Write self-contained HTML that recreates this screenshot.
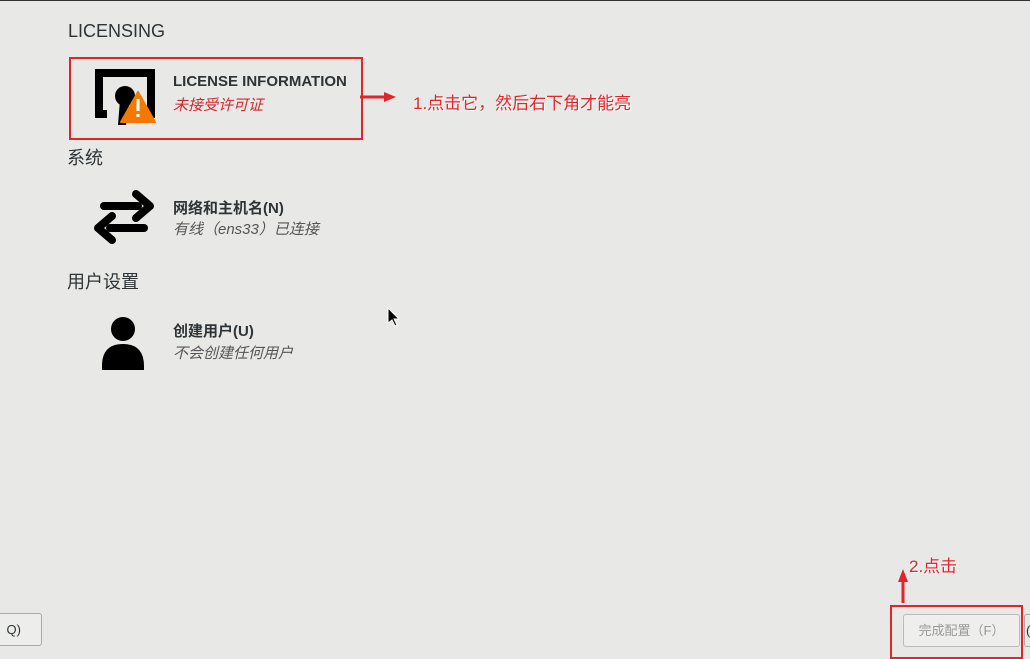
<!DOCTYPE html>
<html><head><meta charset="utf-8"><style>
body{margin:0;width:1030px;height:650px;background:#e8e8e7;position:relative;overflow:hidden;font-family:"Liberation Sans","Noto Sans CJK SC",sans-serif;color:#2e3436}
.a{position:absolute;white-space:nowrap}
.h{font-size:18px;color:#2e3436}
.t{font-size:15px;font-weight:bold;color:#2e3436}
.s{font-size:15px;font-style:italic;color:#555}
.ann{color:#e0252b;font-size:17px;text-shadow:1px 1px 0 #fff}
</style></head><body>
<div class="a" style="left:0;top:0;width:1030px;height:1px;background:#333"></div>
<div class="a h" style="left:68px;top:21px">LICENSING</div>
<div class="a" style="left:69px;top:57px;width:290px;height:79px;border:2px solid #e0252b"></div>
<svg class="a" style="left:94px;top:68px" width="62" height="58" viewBox="0 0 62 58">
<path d="M1 1h60v49h-11v-8h3V9H9v33h4v8H1z" fill="#000"/>
<circle cx="31" cy="28" r="10" fill="#000"/><path d="M26 32l10 0-4 25h-8z" fill="#000"/>
<path d="M44 24l17 30H27z" fill="#f57900" stroke="#f57900" stroke-width="2" stroke-linejoin="round"/><rect x="42.5" y="31" width="3" height="12" fill="#fff"/><rect x="42.5" y="46" width="3" height="3" fill="#fff"/>
</svg>
<div class="a t" style="left:173px;top:73px">LICENSE INFORMATION</div>
<div class="a s" style="left:173px;top:94px;color:#d0282d">未接受许可证</div>
<svg class="a" style="left:358px;top:90px" width="40" height="14"><path d="M2 7h26" stroke="#e0252b" stroke-width="3"/><path d="M26 2l12 5-12 5z" fill="#e0252b"/></svg>
<div class="a ann" style="left:413px;top:89px">1.点击它，然后右下角才能亮</div>
<div class="a h" style="left:67px;top:144px">系统</div>
<svg class="a" style="left:92px;top:188px" width="64" height="58" viewBox="0 0 64 58">
<path d="M12 18h34" stroke="#000" stroke-width="8" stroke-linecap="round"/><path d="M44 6l14 12-14 12" fill="none" stroke="#000" stroke-width="8" stroke-linecap="round" stroke-linejoin="round"/>
<path d="M52 40H18" stroke="#000" stroke-width="8" stroke-linecap="round"/><path d="M20 28L6 40l14 12" fill="none" stroke="#000" stroke-width="8" stroke-linecap="round" stroke-linejoin="round"/>
</svg>
<div class="a t" style="left:173px;top:197px">网络和主机名(N)</div>
<div class="a s" style="left:173px;top:218px">有线（ens33）已连接</div>
<div class="a h" style="left:67px;top:268px">用户设置</div>
<svg class="a" style="left:102px;top:316px" width="42" height="54" viewBox="0 0 42 54"><circle cx="21" cy="13" r="12" fill="#000"/><path d="M0 50q0-22 21-22q21 0 21 22v4H0z" fill="#000"/></svg>
<div class="a t" style="left:173px;top:320px">创建用户(U)</div>
<div class="a s" style="left:173px;top:342px">不会创建任何用户</div>
<svg class="a" style="left:387px;top:307px" width="12" height="20"><path d="M1 1v15l4-3 3 6 2-1-3-6h5z" fill="#000" stroke="#fff" stroke-width="1"/></svg>
<div class="a" style="left:-10px;top:613px;width:50px;height:31px;border:1px solid #aaa;border-radius:3px;background:#ededec;font-size:13px;line-height:31px;text-align:right"><span style="margin-right:20px">Q)</span></div>
<svg class="a" style="left:895px;top:568px" width="16" height="36"><path d="M8 35V12" stroke="#e0252b" stroke-width="3"/><path d="M3 14l5-13 5 13z" fill="#e0252b"/></svg>
<div class="a ann" style="left:909px;top:552px">2.点击</div>
<div class="a" style="left:890px;top:605px;width:129px;height:50px;border:2px solid #e0252b"></div>
<div class="a" style="left:903px;top:614px;width:115px;height:31px;border:1px solid #bbb;border-radius:3px;background:#eeeeed;color:#999;font-size:13px;line-height:31px;text-align:center">完成配置（F）</div>
<div class="a" style="left:1024px;top:614px;width:10px;height:31px;border:1px solid #aaa;border-radius:3px;font-size:13px;line-height:31px;padding-left:1px">(</div>
</body></html>
